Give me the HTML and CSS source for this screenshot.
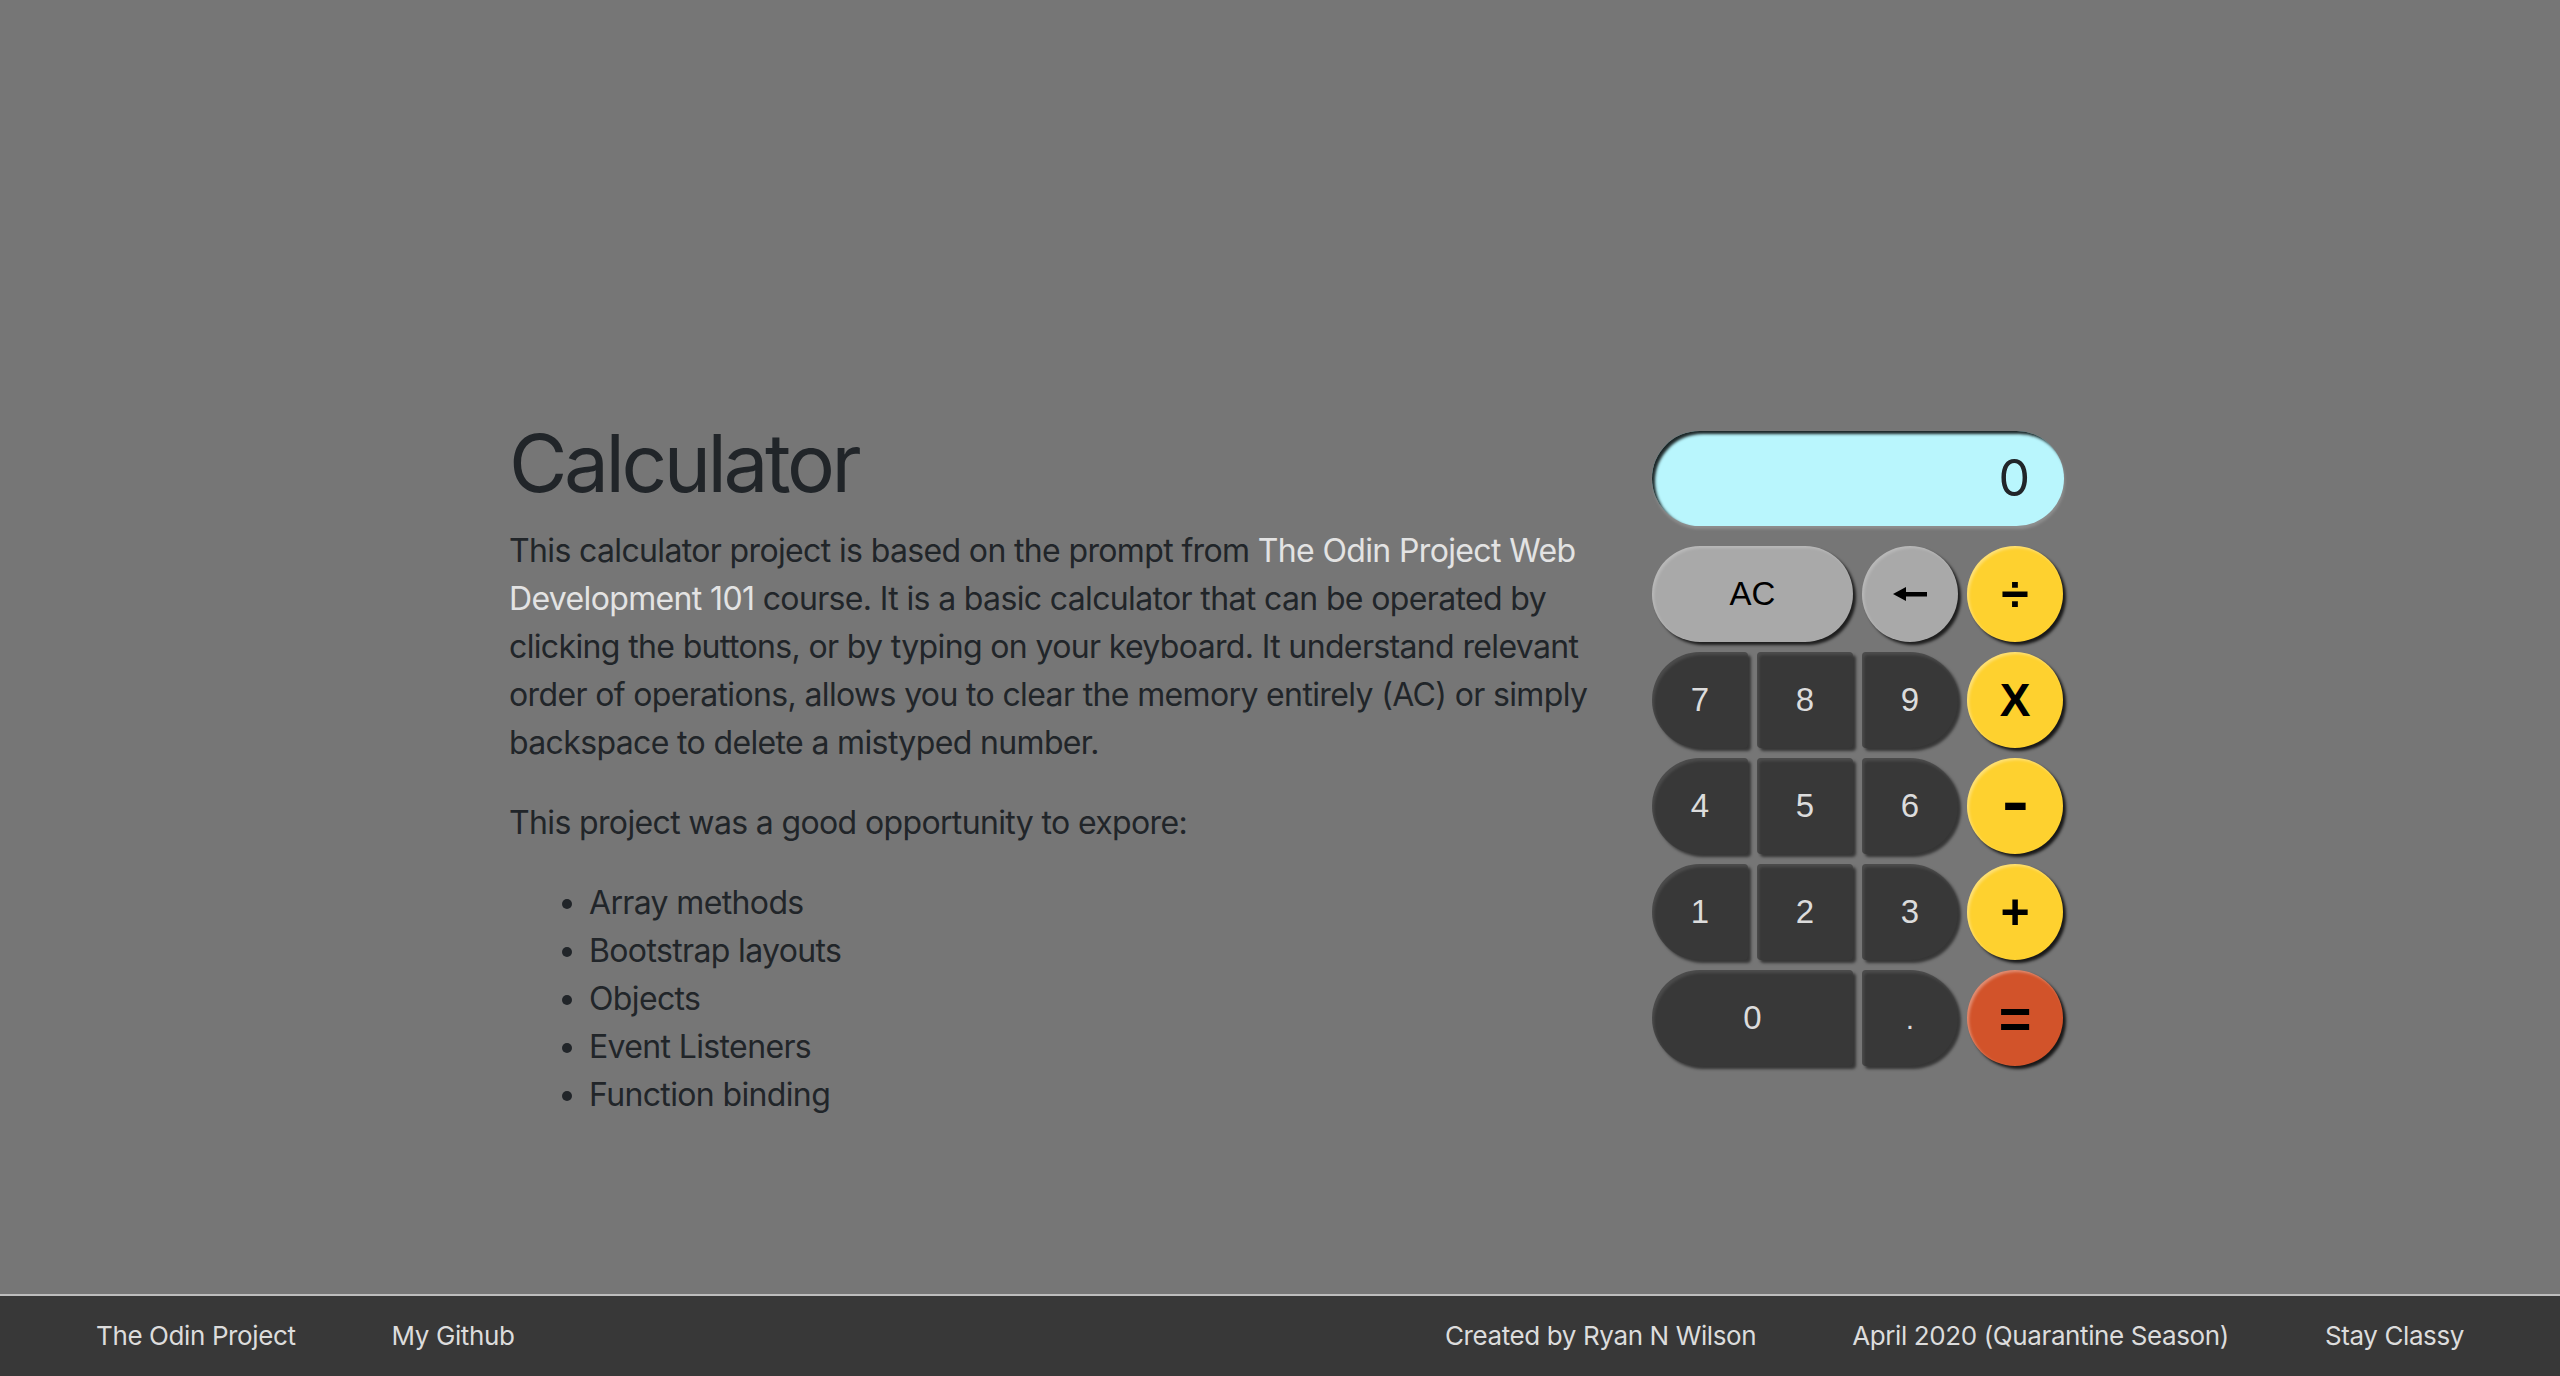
FILE: index.html
```
<!DOCTYPE html>
<html lang="en">
<head>
<meta charset="utf-8">
<title>Calculator</title>
<link rel="stylesheet" href="styles.css">
</head>
<body>
<main class="page">
  <div class="content">
    <section class="intro">
      <h1 class="title">Calculator</h1>
      <p class="text">This calculator project is based on the prompt from <a class="link" href="#">The Odin Project Web Development 101</a> course. It is a basic calculator that can be operated by clicking the buttons, or by typing on your keyboard. It understand relevant order of operations, allows you to clear the memory entirely (AC) or simply backspace to delete a mistyped number.</p>
      <p class="text">This project was a good opportunity to expore:</p>
      <ul class="topics">
        <li>Array methods</li>
        <li>Bootstrap layouts</li>
        <li>Objects</li>
        <li>Event Listeners</li>
        <li>Function binding</li>
      </ul>
    </section>
    <section class="calc">
      <div class="display">0</div>
      <div class="keys">
        <button class="key key-grey key-wide">AC</button>
        <button class="key key-grey key-round" aria-label="backspace"><svg class="back-icon" width="34" height="14" viewBox="0 0 34 14"><polygon points="0,7 13,0 13,14" fill="#000"/><rect x="11" y="5" width="23" height="4.5" fill="#000"/></svg></button>
        <button class="key key-op">÷</button>

        <button class="key key-num key-left">7</button>
        <button class="key key-num key-mid">8</button>
        <button class="key key-num key-right">9</button>
        <button class="key key-op key-x">X</button>

        <button class="key key-num key-left">4</button>
        <button class="key key-num key-mid">5</button>
        <button class="key key-num key-right">6</button>
        <button class="key key-op"><span class="minus">-</span></button>

        <button class="key key-num key-left">1</button>
        <button class="key key-num key-mid">2</button>
        <button class="key key-num key-right">3</button>
        <button class="key key-op">+</button>

        <button class="key key-num key-left key-wide">0</button>
        <button class="key key-num key-right key-dot">.</button>
        <button class="key key-eq">=</button>
      </div>
    </section>
  </div>
</main>
<footer class="footer">
  <nav class="footer-group">
    <a class="footer-item" href="#">The Odin Project</a>
    <a class="footer-item" href="#">My Github</a>
  </nav>
  <div class="footer-group">
    <span class="footer-item">Created by Ryan N Wilson</span>
    <span class="footer-item">April 2020 (Quarantine Season)</span>
    <span class="footer-item">Stay Classy</span>
  </div>
</footer>
</body>
</html>
```
FILE: styles.css
```
* { box-sizing: border-box; }

html, body { height: 100%; }

body {
  margin: 0;
  min-height: 100vh;
  display: flex;
  flex-direction: column;
  background: #767676;
  color: #212529;
  font-family: Inter, "Liberation Sans", sans-serif;
  font-size: 32px;
  line-height: 1.5;
}

.page {
  flex: 1;
  padding: 415px 0 0 509px;
}

.content {
  display: flex;
  align-items: flex-start;
  gap: 43px;
}

.intro {
  width: 1100px;
  letter-spacing: -0.02em;
}

.title {
  margin: 0 0 16px;
  font-size: 80px;
  font-weight: 400;
  line-height: 1.2;
  letter-spacing: -0.043em;
}

.text {
  margin: 0 0 32px;
}

.link {
  color: #e3e3e3;
  text-decoration: none;
}

.topics {
  margin: 0 0 32px;
  padding-left: 80px;
}

.calc {
  width: 412px;
  margin-top: 16px;
}

.display {
  height: 95px;
  border-radius: 48px;
  background: #b9f6fd;
  padding: 0 34px;
  display: flex;
  align-items: center;
  justify-content: flex-end;
  font-size: 50px;
  color: #212529;
  box-shadow: inset 3px 3px 3px rgba(0, 0, 0, 0.85), 1px 3px 3px rgba(255, 255, 255, 0.18);
  margin-bottom: 20px;
}

.keys {
  display: grid;
  grid-template-columns: repeat(4, 96px);
  grid-auto-rows: 96px;
  column-gap: 9px;
  row-gap: 10px;
}

.key {
  border: none;
  padding: 0;
  margin: 0;
  display: flex;
  align-items: center;
  justify-content: center;
  font-family: "Liberation Sans", Arial, sans-serif;
  font-size: 33px;
  cursor: pointer;
}

.key-wide { grid-column: span 2; }

.key-grey {
  background: #a9a9a9;
  color: #000;
  border-radius: 48px;
  box-shadow: 3px 3px 3px rgba(0, 0, 0, 0.75), inset 2px 2px 3px rgba(255, 255, 255, 0.2);
}

.key-round { border-radius: 50%; }

.back-icon { display: block; }

.key-num {
  background: #383838;
  color: #dcdcdc;
  box-shadow: 3px 3px 3px rgba(0, 0, 0, 0.55), inset 2px 3px 3px rgba(255, 255, 255, 0.1);
  border-radius: 4px;
}

.key-left { border-radius: 48px 4px 4px 48px; }
.key-right { border-radius: 4px 48px 48px 4px; }

.key-dot {
  align-items: flex-end;
  padding-bottom: 30px;
  font-size: 30px;
}

.key-op,
.key-eq {
  border-radius: 50%;
  color: #000;
  font-weight: 700;
  font-size: 50px;
  box-shadow: 3px 3px 3px rgba(0, 0, 0, 0.8), inset 2px 2px 3px rgba(255, 255, 255, 0.35);
}

.key-op { background: #fed12f; }
.key-x { font-size: 46px; }

.minus {
  display: inline-block;
  font-size: 62px;
  line-height: 1;
  transform: translateY(-5px) scaleX(1.3);
}

.key-eq {
  background: #d2532a;
  font-size: 56px;
}

.footer {
  height: 82px;
  border-top: 2px solid #bdbdbd;
  background: #383838;
  display: flex;
  align-items: center;
  justify-content: space-between;
  padding: 0 48px 2px;
  font-size: 26px;
  letter-spacing: -0.015em;
}

.footer-group {
  display: flex;
}

.footer-item {
  color: #dcdcdc;
  text-decoration: none;
  padding: 0 48px;
}
```
